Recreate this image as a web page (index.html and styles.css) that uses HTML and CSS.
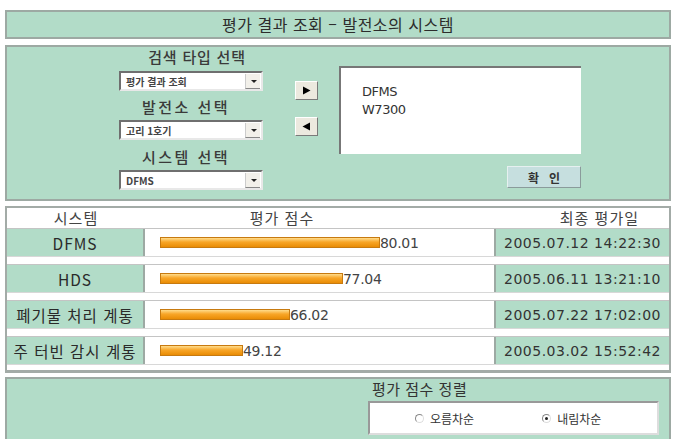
FILE: index.html
```
<!DOCTYPE html>
<html lang="ko">
<head>
    <meta charset="UTF-8">
    <title>평가 결과 조회</title>
    <link rel="stylesheet" href="styles.css">
</head>
<body>
    <div class="page">
        <div class="title-bar">평가 결과 조회 &ndash; 발전소의 시스템</div>

        <div class="search-panel">
            <div class="pickers">
                <div class="label l1">검색 타입 선택</div>
                <div class="combo"><span>평가 결과 조회</span><i class="drop"></i></div>
                <div class="label l2">발전소 선택</div>
                <div class="combo"><span>고리 1호기</span><i class="drop"></i></div>
                <div class="label l3">시스템 선택</div>
                <div class="combo"><span>DFMS</span><i class="drop"></i></div>
            </div>
            <div class="movers">
                <button class="mover">
                    <svg width="9" height="9" viewBox="0 0 9 9"><path d="M1 0.5 L8.5 4.5 L1 8.5 Z" fill="#000"/></svg>
                </button>
                <button class="mover">
                    <svg width="9" height="9" viewBox="0 0 9 9"><path d="M8 0.5 L0.5 4.5 L8 8.5 Z" fill="#000"/></svg>
                </button>
            </div>
            <div class="picked">
                <div class="listbox">
                    <div>DFMS</div>
                    <div>W7300</div>
                </div>
                <button class="ok">확&nbsp;&nbsp;&nbsp;인</button>
            </div>
        </div>

        <div class="results">
            <div class="head">
                <span class="h-name">시스템</span>
                <span class="h-score">평가 점수</span>
                <span class="h-date">최종 평가일</span>
            </div>
            <div class="row">
                <div class="name">DFMS</div>
                <div class="score"><span class="bar" style="width: 220px"></span>80.01</div>
                <div class="date">2005.07.12 14:22:30</div>
            </div>
            <div class="row">
                <div class="name">HDS</div>
                <div class="score"><span class="bar" style="width: 183px"></span>77.04</div>
                <div class="date">2005.06.11 13:21:10</div>
            </div>
            <div class="row">
                <div class="name">폐기물 처리 계통</div>
                <div class="score"><span class="bar" style="width: 130px"></span>66.02</div>
                <div class="date">2005.07.22 17:02:00</div>
            </div>
            <div class="row">
                <div class="name">주 터빈 감시 계통</div>
                <div class="score"><span class="bar" style="width: 83px"></span>49.12</div>
                <div class="date">2005.03.02 15:52:42</div>
            </div>
        </div>

        <div class="sort-panel">
            <div class="sort-box">
                <div class="sort-title">평가 점수 정렬</div>
                <div class="radios">
                    <label class="radio"><i class="dot"></i>오름차순</label>
                    <label class="radio"><i class="dot on"></i>내림차순</label>
                </div>
            </div>
        </div>
    </div>
</body>
</html>
```

FILE: styles.css
```
body {
    margin: 0;
    background: #fff;
    font-family: "Noto Sans CJK KR", "DejaVu Sans", sans-serif;
    color: #333;
}

.page {
    padding: 10px 6px 0 5px;
}

.title-bar {
    height: 25px;
    line-height: 25px;
    background: #b2dcc8;
    border: 2px solid #9da9a3;
    text-align: center;
    font-size: 16px;
    letter-spacing: 0.5px;
    color: #2c2c2c;
}

/* search form */
.search-panel {
    margin-top: 6px;
    height: 152px;
    background: #b2dcc8;
    border: 2px solid #9da9a3;
    display: flex;
}

.pickers {
    width: 144px;
    margin-left: 112px;
    display: flex;
    flex-direction: column;
}

.label {
    height: 20px;
    line-height: 20px;
    font-size: 15px;
    font-weight: 500;
    color: #3a3a3a;
    text-align: center;
    white-space: nowrap;
}

.l1 { margin-bottom: 4px; padding-left: 12px; letter-spacing: 0.8px; }
.l2 { margin-top: 6px; margin-bottom: 3px; padding-right: 10px; letter-spacing: 2.5px; }
.l3 { margin-top: 7px; margin-bottom: 3px; padding-right: 10px; letter-spacing: 2.5px; }

.combo {
    height: 16px;
    background: #fff;
    border: 2px solid;
    border-color: #6f6f6f #e8e8e8 #e8e8e8 #6f6f6f;
    display: flex;
    align-items: center;
    font-size: 10px;
    font-weight: bold;
    color: #444;
}

.combo span {
    flex: 1;
    padding-left: 5px;
}

.drop {
    width: 14px;
    height: 14px;
    margin-right: 1px;
    background: #f2f0ea;
    border-left: 1px solid #ccc;
    border-bottom: 1px solid #888;
    position: relative;
}

.drop::after {
    content: "";
    position: absolute;
    left: 5px;
    top: 6px;
    border-left: 3px solid transparent;
    border-right: 3px solid transparent;
    border-top: 3px solid #222;
}

.movers {
    margin-left: 32px;
    padding-top: 34px;
    display: flex;
    flex-direction: column;
    gap: 17px;
}

.mover {
    width: 23px;
    height: 19px;
    padding: 0;
    background: #ece9df;
    border: 1px solid;
    border-color: #fff #7a7a7a #7a7a7a #fff;
    display: flex;
    align-items: center;
    justify-content: center;
}

.picked {
    margin-left: 21px;
    padding-top: 19px;
    display: flex;
    flex-direction: column;
    align-items: flex-end;
}

.listbox {
    width: 219px;
    height: 71px;
    padding: 15px 0 0 21px;
    background: #fff;
    border-top: 2px solid #777;
    border-left: 2px solid #777;
    font-family: "DejaVu Sans", sans-serif;
    font-size: 13px;
    line-height: 18px;
    color: #333;
    letter-spacing: -0.5px;
}

.ok {
    margin-top: 12px;
    width: 74px;
    height: 22px;
    padding: 0;
    background: #c6dfdf;
    border: 1px solid;
    border-color: #e6f0f0 #8a9b9b #8a9b9b #e6f0f0;
    font-family: "Noto Sans CJK KR", sans-serif;
    font-size: 12px;
    font-weight: bold;
    color: #333;
}

/* result table */
.results {
    margin-top: 5px;
    height: 162px;
    border: 2px solid #a3aba7;
    border-bottom-width: 3px;
}

.head {
    height: 20px;
    line-height: 20px;
    display: flex;
    font-size: 15px;
    color: #444;
    letter-spacing: 1px;
}

.h-name {
    width: 138px;
    text-align: center;
}

.h-score {
    width: 274px;
    text-align: center;
}

.h-date {
    flex: 1;
    text-align: right;
    padding-right: 30px;
}

.row {
    height: 29px;
    margin-bottom: 7px;
    display: flex;
    border-top: 1px solid #c4c4c4;
    border-bottom: 1px solid #d8d8d8;
    box-sizing: border-box;
}

.name {
    width: 136px;
    background: #b2dcc8;
    border-right: 2px solid #9da9a3;
    display: flex;
    align-items: center;
    justify-content: center;
    font-size: 15.5px;
    color: #2a2a2a;
    white-space: nowrap;
    letter-spacing: 1px;
}

.score {
    width: 349px;
    display: flex;
    align-items: center;
    padding-left: 15px;
    box-sizing: border-box;
    font-family: "DejaVu Sans", sans-serif;
    font-size: 14px;
    color: #444;
    letter-spacing: -0.3px;
}

.bar {
    height: 11px;
    box-sizing: border-box;
    border: 1px solid #c77a10;
    background: linear-gradient(#ffdc8c, #f8a628 45%, #e98c05);
}

.date {
    flex: 1;
    background: #b2dcc8;
    border-left: 2px solid #9da9a3;
    display: flex;
    align-items: center;
    justify-content: center;
    font-family: "DejaVu Sans", sans-serif;
    font-size: 14px;
    color: #333;
    letter-spacing: 0.5px;
}

/* sort options */
.sort-panel {
    margin-top: 4px;
    height: 70px;
    background: #b2dcc8;
    border: 2px solid #9da9a3;
    display: flex;
    justify-content: flex-end;
}

.sort-box {
    width: 291px;
    margin-right: 10px;
}

.sort-title {
    height: 22px;
    line-height: 20px;
    padding-left: 4px;
    font-size: 15px;
    letter-spacing: 0.5px;
    color: #333;
}

.radios {
    height: 30px;
    background: #fff;
    border: 2px solid #999;
    border-right-color: #ddd;
    border-bottom-color: #ddd;
    display: flex;
    align-items: center;
    padding-left: 45px;
    gap: 68px;
    font-size: 12px;
    color: #333;
}

.radio {
    display: flex;
    align-items: center;
    gap: 6px;
}

.dot {
    width: 7px;
    height: 7px;
    border-radius: 50%;
    border: 1px solid #888;
    border-right-color: #ddd;
    border-bottom-color: #ddd;
    position: relative;
}

.dot.on::after {
    content: "";
    position: absolute;
    left: 2px;
    top: 2px;
    width: 3px;
    height: 3px;
    border-radius: 50%;
    background: #222;
}
```
